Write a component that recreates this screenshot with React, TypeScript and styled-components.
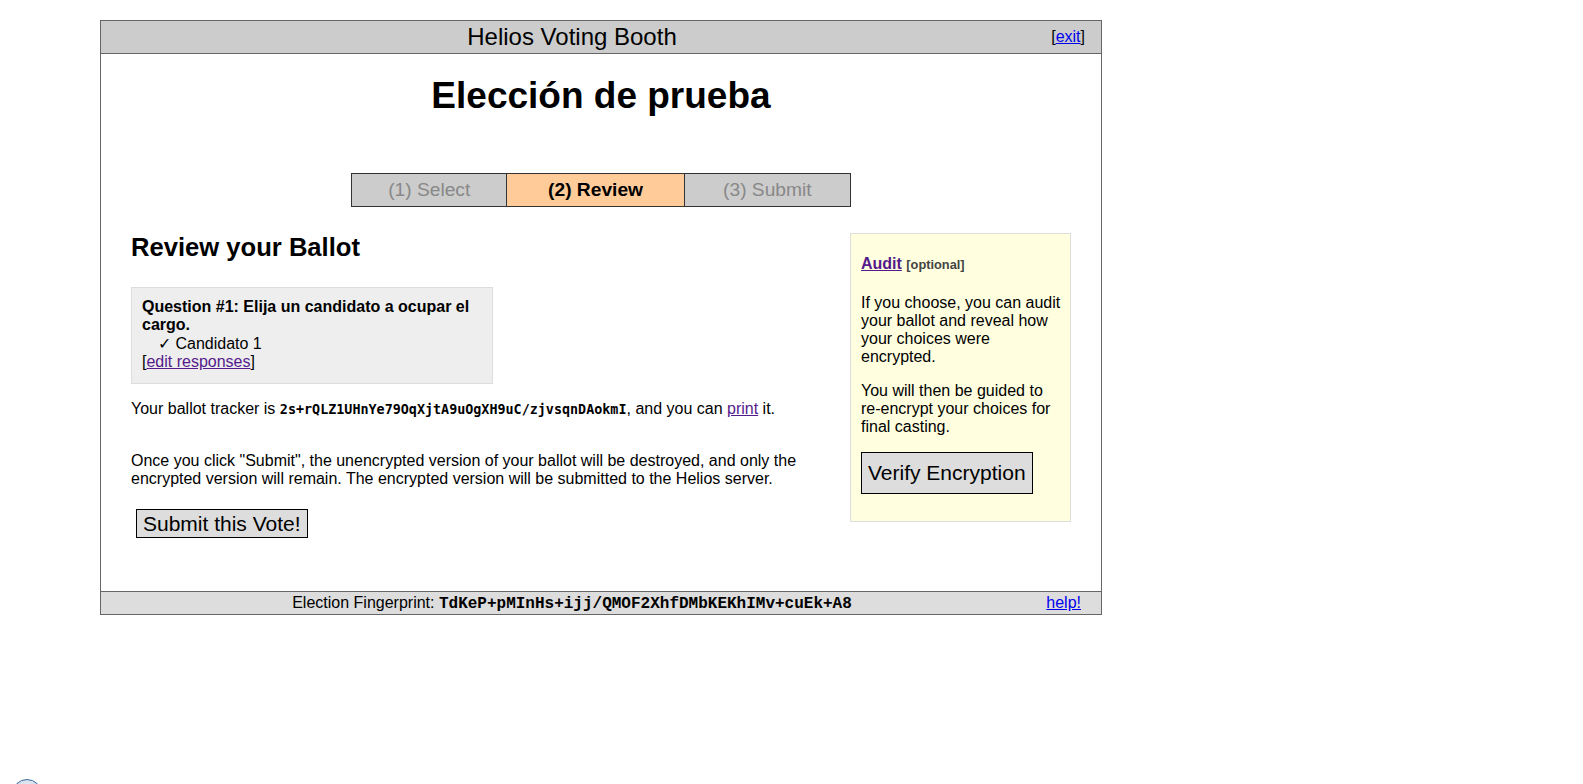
import React from "react";
import styled, { createGlobalStyle } from "styled-components";

const GlobalStyle = createGlobalStyle`
    html, body {
        margin: 0;
        padding: 0;
        background: #fff;
    }
    body {
        font-family: "Liberation Sans", Arial, sans-serif;
        font-size: 16px;
        color: #000;
    }
`;

const Page = styled.div`
    padding: 20px 0 0 100px;
    min-height: 764px;
`;

const Booth = styled.div`
    width: 1000px;
    border: 1px solid #666;
    background: #fff;
`;

const Banner = styled.div<{ $bg: string }>`
    display: flex;
    align-items: center;
    background: ${(p) => p.$bg};
`;

const Header = styled(Banner)`
    border-bottom: 1px solid #666;
    height: 32px;
`;

const Footer = styled(Banner)`
    border-top: 1px solid #666;
    height: 22px;
`;

const BannerMain = styled.div<{ $size: string }>`
    flex: 1;
    text-align: center;
    font-size: ${(p) => p.$size};
`;

const BannerSide = styled.div<{ $pad: number }>`
    width: ${(p) => 58 - p.$pad}px;
    padding-right: ${(p) => p.$pad}px;
    text-align: right;
    font-size: 16px;
`;

const Link = styled.a<{ $visited?: boolean }>`
    color: ${(p) => (p.$visited ? "#551a8b" : "#0000ee")};
    text-decoration: underline;
    cursor: pointer;
`;

const Content = styled.div`
    padding: 0 30px 53px 30px;
`;

const Title = styled.h1`
    margin: 21px 0 0 0;
    font-size: 37px;
    line-height: 42px;
    font-weight: bold;
    text-align: center;
`;

const Progress = styled.table`
    width: 500px;
    margin: 56px auto 0 auto;
    border-collapse: collapse;
`;

const Step = styled.td<{ $active?: boolean }>`
    border: 1px solid #333;
    padding: 5px 4px 6px 4px;
    height: 21px;
    text-align: center;
    font-size: 19.2px;
    line-height: 21px;
    background: ${(p) => (p.$active ? "#ffcc99" : "#cccccc")};
    color: ${(p) => (p.$active ? "#000" : "#888")};
    font-weight: ${(p) => (p.$active ? "bold" : "normal")};
`;

const Section = styled.div`
    display: flex;
    align-items: flex-start;
    gap: 20px;
    margin-top: 26px;
`;

const Main = styled.div`
    flex: 1;
`;

const Heading = styled.h2`
    margin: 0;
    font-size: 25.6px;
    line-height: 29px;
    font-weight: bold;
`;

const QuestionBox = styled.div`
    box-sizing: border-box;
    width: 362px;
    margin-top: 25px;
    padding: 10px 10px 11px 10px;
    background: #eeeeee;
    border: 1px solid #dddddd;
    line-height: 18.4px;
`;

const Question = styled.div`
    font-weight: bold;
`;

const Answer = styled.div`
    padding-left: 16px;
`;

const Para = styled.p<{ $top: number }>`
    margin: ${(p) => p.$top}px 0 0 0;
    line-height: 18.4px;
`;

const Tracker = styled.code`
    font-family: "DejaVu Sans Mono", Consolas, monospace;
    font-weight: bold;
    font-size: 13.4px;
    line-height: 0;
`;

const Fingerprint = styled.code`
    font-family: "Liberation Mono", "Courier New", monospace;
    font-weight: bold;
    font-size: 16px;
    line-height: 0;
`;

const Button = styled.button<{ $padV: number }>`
    font-family: "Liberation Sans", Arial, sans-serif;
    font-size: 21px;
    line-height: 24px;
    color: #000;
    background: #dddddd;
    border: 1px solid #000;
    border-radius: 0;
    padding: ${(p) => p.$padV}px 6px;
    cursor: pointer;
`;

const SubmitButton = styled(Button)`
    display: block;
    margin: 20px 0 0 5px;
    padding-top: 2px;
`;

const AuditBox = styled.div`
    box-sizing: border-box;
    width: 221px;
    padding: 21px 6px 27px 10px;
    background: #ffffe0;
    border: 1px solid #dddddd;
    line-height: 18px;
`;

const AuditTitle = styled.div`
    font-weight: bold;
    line-height: 18.4px;
    margin-bottom: 20px;
`;

const Optional = styled.span`
    font-size: 12.8px;
    color: #444;
`;

const AuditText = styled.p`
    margin: 0 0 16px 0;
`;

const Bubble = styled.div`
    position: fixed;
    left: 12px;
    top: 779px;
    width: 28px;
    height: 28px;
    border-radius: 50%;
    border: 1.5px solid #3a6a9e;
    background: radial-gradient(circle at 50% 30%, #e6eef6, #b8c9da);
`;

const App: React.FC = () => {
    return (
        <>
            <GlobalStyle />
            <Page>
                <Booth>
                    <Header $bg="#cccccc">
                        <BannerMain $size="24px">Helios Voting Booth</BannerMain>
                        <BannerSide $pad={16}>
                            [<Link>exit</Link>]
                        </BannerSide>
                    </Header>
                    <Content>
                        <Title>Elección de prueba</Title>
                        <Progress>
                            <tbody>
                                <tr>
                                    <Step>(1) Select</Step>
                                    <Step $active>(2) Review</Step>
                                    <Step>(3) Submit</Step>
                                </tr>
                            </tbody>
                        </Progress>
                        <Section>
                            <Main>
                                <Heading>Review your Ballot</Heading>
                                <QuestionBox>
                                    <Question>
                                        Question #1: Elija un candidato a ocupar el cargo.
                                    </Question>
                                    <Answer>✓ Candidato 1</Answer>
                                    [<Link $visited>edit responses</Link>]
                                </QuestionBox>
                                <Para $top={16}>
                                    Your ballot tracker is{" "}
                                    <Tracker>2s+rQLZ1UHnYe79OqXjtA9uOgXH9uC/zjvsqnDAokmI</Tracker>, and
                                    you can <Link $visited>print</Link> it.
                                </Para>
                                <Para $top={34}>
                                    Once you click "Submit", the unencrypted version of your ballot
                                    will be destroyed, and only the encrypted version will remain.
                                    The encrypted version will be submitted to the Helios server.
                                </Para>
                                <SubmitButton $padV={1}>Submit this Vote!</SubmitButton>
                            </Main>
                            <AuditBox>
                                <AuditTitle>
                                    <Link $visited>Audit</Link> <Optional>[optional]</Optional>
                                </AuditTitle>
                                <AuditText>
                                    If you choose, you can audit your ballot and reveal how your
                                    choices were encrypted.
                                </AuditText>
                                <AuditText>
                                    You will then be guided to re-encrypt your choices for final
                                    casting.
                                </AuditText>
                                <Button $padV={8}>Verify Encryption</Button>
                            </AuditBox>
                        </Section>
                    </Content>
                    <Footer $bg="#dddddd">
                        <BannerMain $size="16px">
                            Election Fingerprint:{" "}
                            <Fingerprint>TdKeP+pMInHs+ijj/QMOF2XhfDMbKEKhIMv+cuEk+A8</Fingerprint>
                        </BannerMain>
                        <BannerSide $pad={20}>
                            <Link>help!</Link>
                        </BannerSide>
                    </Footer>
                </Booth>
            </Page>
            <Bubble />
        </>
    );
};

export default App;
